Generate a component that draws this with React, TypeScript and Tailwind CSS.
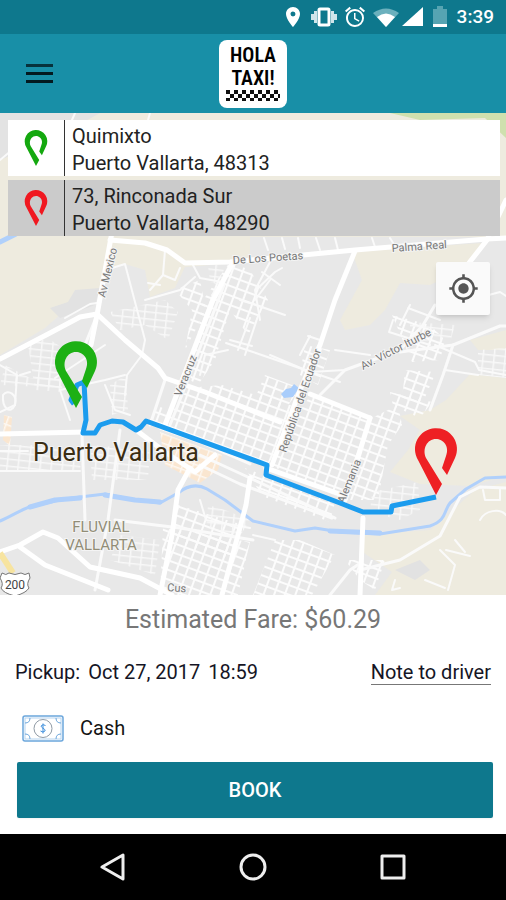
import { MdAlarm, MdLocationOn, MdMyLocation } from "react-icons/md";

const PIN_PATH =
  "M0 46 L-18 11 A21 21 0 1 1 19 9 L11 26 L6 19 L10 7 C14 -3 7 -10 0 -10 C-9 -10 -14 0 -10 9 L6 35 Z";

const mainRoads = [
  "M112 232 L97 315 L91 345",
  "M110 240 L145 243 L167 250 L185 263 L230 262 L355 250 L487 239 L506 238",
  "M0 359 L50 333 L80 317 L97 314 L125 340 L158 368 L165 378 L205 392 L280 422",
  "M233 262 L213 300 L165 425",
  "M355 251 L335 300 L320 345 L300 390 L272 465",
  "M0 434 L85 432",
  "M0 552 L20 545 L43 532 L58 538 L90 567 L140 578 L172 595",
  "M20 547 L45 565 L108 590",
  "M363 518 L360 595",
  "M190 468 L178 490 L172 535 L160 595",
  "M250 478 L246 505 L222 595",
  "M506 200 L487 240 L440 300",
  "M310 394 L370 418",
  "M136 430 L165 452 L195 472 L215 455",
  "M266 468 L345 496",
  "M345 500 L370 418",
];

const midRoads = [
  "M224 285 L178 405 L170 425",
  "M120 430 L108 520 L95 590",
  "M82 435 L85 520",
  "M115 520 L180 528 L253 540",
  "M200 455 L250 478 L335 518",
  "M200 465 L240 484 L332 518",
  "M435 305 L423 325 L400 350 L345 370 L320 395",
  "M400 352 L453 345 L500 326 L506 326",
  "M453 345 L443 375 L430 410",
  "M160 428 L200 442 L250 464",
  "M85 345 L97 315",
  "M165 380 L150 425",
  "M360 570 L400 560 L440 536 L460 497 L480 487 L506 488",
  "M330 595 L350 570 L362 562",
];

const thinRoads = [
  "M112 268 L125 264 L145 340 L142 355 L127 375 L125 395",
  "M65 318 L90 304 L97 303",
  "M145 300 L180 290 L195 277",
  "M165 250 L163 275 L150 290 M163 275 L175 280 L180 268 M160 285 L148 283",
  "M193 265 L200 278 L222 282 L212 295",
  "M228 350 L205 355 L200 375",
  "M0 471 L80 471 M0 451 L28 451",
  "M0 412 L15 405 L17 375 L0 365",
  "M3 395 C8 388 18 395 15 405 C10 415 2 408 3 395",
  "M226 343 L253 352 L340 382",
  "M270 355 L310 372 L345 370",
  "M310 336 L300 355 M308 336 L320 340 M335 350 L370 355",
  "M435 345 L475 362 L479 370 L506 375",
  "M445 370 L478 375 M393 320 L389 332 L430 345",
  "M270 262 L255 290 L260 320 M240 300 L253 304 L285 315",
  "M250 318 L238 350 M258 316 L245 355 M230 340 L252 346",
  "M70 420 L60 390 L105 380 L125 375",
  "M105 385 L115 410 L130 415",
  "M55 378 L105 345 M20 375 L30 372",
  "M253 535 L275 540 M200 500 L206 520 L250 528",
  "M440 550 L455 565 L448 590 M425 580 L445 588 M446 550 L470 556",
  "M455 540 L465 552 M395 580 L392 590 L400 588",
  "M480 520 C485 510 500 508 506 515 M483 490 L485 500 L500 500 L500 488",
  "M0 160 L12 150 L20 160 M150 113 L148 120 M75 113 L72 120",
  "M268 250 L264 238 M285 249 L282 238 M300 248 L298 238 M320 250 L316 238 M338 250 L335 238 M375 247 L372 238 M395 246 L390 238",
  "M470 300 L500 292 L506 296 M410 305 L400 325 M408 308 L440 320",
  "M256 290 L275 272 L282 268 M255 300 L270 280 M262 272 L280 285",
];

// Blocks of small streets, one polygon per neighbourhood
const tiltedBlocks = [
  "310,396 370,419 398,405 402,425 388,445 378,500 345,500 272,466 290,425",
  "222,385 300,408 286,440 268,464 150,420 156,405 172,412 188,388",
  "203,300 230,262 250,270 268,300 248,335 230,310 215,360 198,385 190,380",
  "245,468 335,502 330,522 262,496",
  "265,375 300,388 285,410 255,398",
  "163,528 250,542 238,595 160,595",
  "172,540 178,505 240,524 232,560",
  "275,540 300,540 335,555 312,595 253,595",
  "390,392 432,402 420,418 393,406",
  "345,560 385,560 375,590 360,580",
  "392,315 430,325 445,340 440,360 412,362",
  "405,370 436,372 423,402 402,400",
  "305,345 330,350 318,385 300,375",
  "175,290 200,280 206,310 185,350 192,310",
];

const straightBlocks = [
  "28,345 48,338 65,350 62,392 35,390",
  "5,365 30,378 62,378 62,388 0,385",
  "110,312 165,300 178,312 168,340 145,325 120,330",
  "90,445 150,450 148,480 92,480",
  "110,385 126,375 128,410 112,415",
  "0,445 30,445 82,452 80,470 0,470",
  "208,505 225,510 250,520 240,536 206,528",
  "478,350 506,348 506,378 478,375",
  "372,492 418,482 420,510 400,520 370,512",
  "120,535 160,540 155,575 110,560",
  "410,322 455,325 450,342 410,340",
  "208,265 225,265 220,285 210,282",
];

const labels = [
  { text: "Av Mexico", x: 105, y: 298, turn: -76 },
  { text: "De Los Poetas", x: 233, y: 264, turn: -4 },
  { text: "Palma Real", x: 392, y: 252, turn: -4 },
  { text: "Veracruz", x: 181, y: 397, turn: -68 },
  { text: "República del Ecuador", x: 286, y: 453, turn: -71 },
  { text: "Av. Víctor Iturbe", x: 363, y: 370, turn: -27 },
  { text: "Alemania", x: 344, y: 504, turn: -68 },
  { text: "Cus", x: 167, y: 591, turn: 4 },
];

function CityMap() {
  return (
    <svg
      className="absolute inset-0 h-full w-full"
      viewBox="0 113 506 482"
      preserveAspectRatio="xMidYMid slice"
      role="img"
      aria-label="Route map"
    >
      <defs>
        <pattern id="tilted" width="10" height="9" patternUnits="userSpaceOnUse" patternTransform="rotate(20)">
          <path d="M0 0H10M0 0V9" stroke="#fcfcfc" strokeWidth="4" fill="none" />
        </pattern>
        <pattern id="straight" width="11" height="7" patternUnits="userSpaceOnUse" patternTransform="rotate(6)">
          <path d="M0 0H11M0 0V7" stroke="#f8f8f8" strokeWidth="3" fill="none" />
        </pattern>
        <pattern id="shops" width="10" height="9" patternUnits="userSpaceOnUse" patternTransform="rotate(20)">
          <rect width="10" height="9" fill="#fae6d0" />
          <path d="M0 0H10M0 0V9" stroke="#fdf8f2" strokeWidth="3" fill="none" />
        </pattern>
      </defs>

      <rect y="113" width="506" height="482" fill="#e8e8e8" />
      <g fill="#eeebdf">
        <path d="M0 150 L100 113 H506 V237 H250 V262 L185 267 L175 288 L150 297 L145 270 L125 264 L110 268 L98 290 L70 306 L45 328 L0 355 Z" />
        <path d="M352 252 L482 243 L466 268 L430 285 L400 283 L385 310 L370 325 L345 330 L340 320 L362 280 Z" />
        <path d="M470 340 L506 330 V350 L478 350 Z" />
        <path d="M506 378 L470 374 L446 400 L430 410 L400 416 L420 430 L408 450 L390 472 L420 484 L470 486 L506 476 Z" />
        <path d="M364 535 L430 530 L455 508 L475 490 L506 482 V595 H375 L392 572 L364 553 Z" />
      </g>
      <path d="M390 113 H506 V138 L485 118 L420 120 Z" fill="#cfe0ae" />
      <path d="M0 113 H100 L60 135 L0 160 Z" fill="#e3e3e3" />
      <path d="M50 308 L68 302 L75 290 L100 288 L95 305 L60 318 Z M395 570 L420 560 L430 570 L415 580 Z" fill="#e2e2e2" />

      {tiltedBlocks.map((points) => (
        <polygon key={points} points={points} fill="url(#tilted)" />
      ))}
      {straightBlocks.map((points) => (
        <polygon key={points} points={points} fill="url(#straight)" />
      ))}
      <polygon points="160,432 222,455 218,470 200,483 165,465" fill="url(#shops)" />
      <polygon points="4,415 12,417 10,446 3,440" fill="url(#shops)" />

      <g fill="none" stroke="#b0d0fb" strokeLinecap="round" strokeLinejoin="round">
        <path
          d="M0 521 C12 516 22 509 30 507 S55 500 80 497 L105 494 L130 499 L160 503 L178 493 C188 485 198 484 207 489 L225 500 L253 521 L295 531 L315 528 L340 532 L380 534 L430 526 C447 520 443 512 450 503 L466 489 L485 478 L506 477"
          strokeWidth="3"
        />
        <path d="M30 507 L55 500 L80 498 M105 495 L135 500 L160 502 M330 531 L380 533" strokeWidth="5" />
        <path d="M0 242 L16 234" strokeWidth="5" />
      </g>
      <path d="M281 394 L286 389 L291 388 L294 384 L299 388 L293 397 L284 398 Z" fill="#a9cdfb" />

      <g fill="none" stroke="#fafafa" strokeLinecap="round" strokeLinejoin="round">
        {thinRoads.map((d) => (
          <path key={d} d={d} strokeWidth="2" />
        ))}
        {midRoads.map((d) => (
          <path key={d} d={d} strokeWidth="3" />
        ))}
        {mainRoads.map((d) => (
          <path key={d} d={d} stroke="#ffffff" strokeWidth="5" />
        ))}
      </g>
      <path d="M0 553 L13 573" stroke="#f7e4a0" strokeWidth="6" />

      <g
        fill="#777777"
        stroke="#f4f4f4"
        strokeWidth="2"
        paintOrder="stroke"
        fontFamily="Roboto, sans-serif"
        fontSize="11"
      >
        {labels.map(({ text, x, y, turn }) => (
          <text key={text} x={x} y={y} transform={`rotate(${turn} ${x} ${y})`}>
            {text}
          </text>
        ))}
      </g>
      <g fontFamily="Roboto, sans-serif" textAnchor="middle" paintOrder="stroke" stroke="#f4f4f4" strokeWidth="2">
        <text x="101" y="532" fontSize="15" fill="#918d77">FLUVIAL</text>
        <text x="101" y="550" fontSize="15" fill="#918d77">VALLARTA</text>
        <text x="116" y="461" fontSize="25" fill="#3b2d12">Puerto Vallarta</text>
      </g>

      <path
        d="M2 573 Q6 576 9 573 Q15 576 21 573 Q25 576 29 573 L30 578 Q26 584 29 588 Q26 593 15 596 Q3 593 1 588 Q4 584 0 578 Z"
        fill="#ffffff"
        stroke="#777777"
      />
      <text x="15" y="589" fontSize="12" fontFamily="Roboto, sans-serif" textAnchor="middle" fill="#444444">
        200
      </text>

      <path
        d="M74 404 L71 400 L77 385 L84 382 L86 420 L83 433 L95 433 L100 425 L112 421 L123 422 L136 430 L141 427 L146 421 L267 465 L266 475 L340 503 L363 512 L391 512 L392 506 L436 497"
        fill="none"
        stroke="#1c9cee"
        strokeWidth="5"
        strokeLinejoin="round"
      />
      <path d={PIN_PATH} transform="translate(76 362)" fill="#1db014" />
      <path d={PIN_PATH} transform="translate(436 449)" fill="#ee2024" />
    </svg>
  );
}

function StatusBar() {
  return (
    <div className="flex h-[34px] items-center justify-end bg-[#0e788d] pr-3 text-white">
      <div className="flex items-center gap-1.5">
        <MdLocationOn size={24} />
        <svg width="26" height="20" viewBox="0 0 26 20">
          <path d="M0 7H3V13H0Z M3 4H6V16H3Z M20 4H23V16H20Z M23 7H26V13H23Z" fill="#cfe5ea" />
          <rect x="8" y="2" width="10" height="16" rx="1" fill="none" stroke="#fff" strokeWidth="3" />
        </svg>
        <MdAlarm size={24} />
        <svg width="50" height="20" viewBox="0 0 50 20">
          <path d="M0 6 Q13 -3 26 6 L13 20 Z" fill="#6bb0bd" />
          <path d="M4 10 Q13 3 22 10 L13 20 Z" fill="#fff" />
          <path d="M29 19 L50 0 V19 Z" fill="#fff" />
        </svg>
      </div>
      <svg className="ml-2.5" width="14" height="22" viewBox="0 0 14 22">
        <path d="M0 3 H4 V0 H10 V3 H14 V18 H0 Z" fill="#56a4b2" />
        <path d="M0 18 H14 V21 H0 Z" fill="#fff" />
      </svg>
      <span className="ml-2.5 text-[19px] font-medium">3:39</span>
    </div>
  );
}

function Logo() {
  return (
    <div className="flex h-[68px] w-[68px] flex-col items-center rounded-lg bg-white pt-1 font-['Roboto_Condensed','Liberation_Sans_Narrow','Roboto',sans-serif] text-[20px] leading-[23px] font-semibold text-black">
      <span>HOLA</span>
      <span>TAXI!</span>
      <svg width="54" height="11" viewBox="0 0 54 11" shapeRendering="crispEdges">
        <defs>
          <pattern id="checks" width="8" height="8" patternUnits="userSpaceOnUse">
            <path d="M0 0H4V4H0Z M4 4H8V8H4Z" fill="#111" />
          </pattern>
        </defs>
        <rect width="54" height="11" fill="url(#checks)" />
      </svg>
    </div>
  );
}

function Header() {
  return (
    <header className="grid h-[79px] grid-cols-[1fr_auto_1fr] items-center bg-[#188fa7]">
      <button aria-label="Menu" className="ml-[26px] flex w-[27px] flex-col gap-[5px]">
        <span className="h-[3px] w-full bg-[#07323c]" />
        <span className="h-[3px] w-full bg-[#031a20]" />
        <span className="h-[3px] w-full bg-[#031a20]" />
      </button>
      <Logo />
    </header>
  );
}

type AddressProps = {
  color: string;
  background: string;
  street: string;
  city: string;
};

function Address({ color, background, street, city }: AddressProps) {
  return (
    <button className={`flex h-14 w-full items-center text-left ${background}`}>
      <span className="flex w-14 justify-center">
        <svg width="24" height="36" viewBox="-21 -21 42 67" fill={color}>
          <path d={PIN_PATH} />
        </svg>
      </span>
      <span className="h-full w-px bg-[#333333]" />
      <span className="pt-1 pl-[7px] text-[20px] leading-[27px] text-[#222222]">
        {street}
        <br />
        {city}
      </span>
    </button>
  );
}

function CashIcon() {
  return (
    <svg width="42" height="27" viewBox="0 0 42 27" fill="none" stroke="#6ba6dc">
      <rect x="1" y="1" width="40" height="25" rx="2" strokeWidth="1.5" />
      <rect x="3" y="3" width="36" height="21" stroke="#b5d4f0" />
      <path d="M3 8 Q8 8 8 3 M34 3 Q34 8 39 8 M3 19 Q8 19 8 24 M34 24 Q34 19 39 19" />
      <circle cx="21" cy="13.500" r="9" stroke="#8f9aa5" />
      <path d="M23.500 10.500 Q21 9 19.500 10.500 C18 13 24 13.500 23 16 Q21 18 18.500 16 M21 8.500 V18.500" stroke="#3f8fdc" />
    </svg>
  );
}

function NavBar() {
  return (
    <nav className="flex h-[66px] items-center justify-center gap-[112px] bg-black">
      <button aria-label="Back">
        <svg width="28" height="28" viewBox="0 0 28 28" fill="none" stroke="#eee" strokeWidth="3" strokeLinejoin="round">
          <path d="M3 14 L24 2 V26 Z" />
        </svg>
      </button>
      <button aria-label="Home">
        <svg width="28" height="28" viewBox="0 0 28 28" fill="none" stroke="#eee" strokeWidth="3">
          <circle cx="14" cy="14" r="12" />
        </svg>
      </button>
      <button aria-label="Recent apps">
        <svg width="28" height="28" viewBox="0 0 28 28" fill="none" stroke="#eee" strokeWidth="3" strokeLinejoin="round">
          <rect x="3" y="3" width="22" height="22" />
        </svg>
      </button>
    </nav>
  );
}

export default function App() {
  return (
    <div className="flex min-h-screen flex-col bg-white font-['Roboto',sans-serif]">
      <StatusBar />
      <Header />

      <main className="flex flex-1 flex-col">
        <section className="relative min-h-96 flex-1 overflow-hidden">
          <CityMap />
          <div className="relative flex flex-col gap-1 pt-[7px] pr-1.5 pl-2">
            <Address color="#14a80f" background="bg-white" street="Quimixto" city="Puerto Vallarta, 48313" />
            <Address color="#f01820" background="bg-[#cbcbcb]" street="73, Rinconada Sur" city="Puerto Vallarta, 48290" />
            <button
              aria-label="My location"
              className="mt-[22px] mr-2.5 flex h-[53px] w-[54px] items-center justify-center self-end rounded-xs bg-[#fafafa] text-[#555555] shadow-md"
            >
              <MdMyLocation size={31} />
            </button>
          </div>
        </section>

        <section className="flex flex-col px-[15px] pb-4">
          <p className="pt-[7px] text-center text-[25px] leading-9 text-[#777777]">Estimated Fare: $60.29</p>
          <div className="mt-4 flex h-9 items-center justify-between text-[20px] text-[#151525]">
            <div className="flex gap-2">
              <span>Pickup:</span>
              <span>Oct 27, 2017</span>
              <span>18:59</span>
            </div>
            <a href="#note" className="border-b border-[#777777] leading-6">
              Note to driver
            </a>
          </div>
          <div className="mt-5 flex h-9 items-center gap-4 pl-[7px] text-[20px] text-[#151515]">
            <CashIcon />
            <span>Cash</span>
          </div>
          <button className="-mr-0.5 mt-4 ml-0.5 h-14 rounded-xs bg-[#0e788d] text-[20px] font-medium text-white shadow-xs">
            BOOK
          </button>
        </section>
      </main>

      <NavBar />
    </div>
  );
}
